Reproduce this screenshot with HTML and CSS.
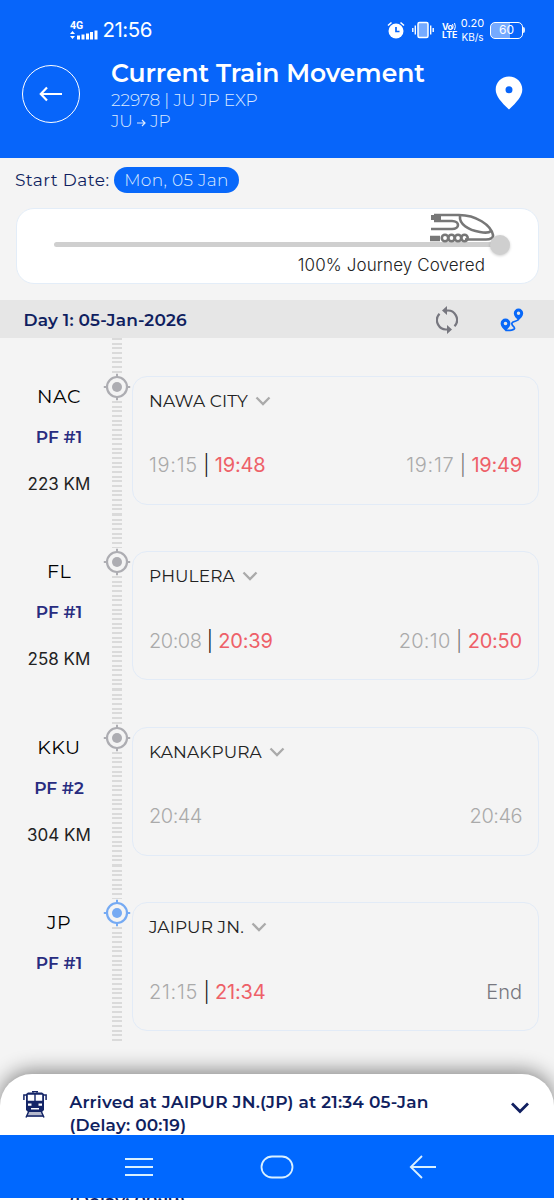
FILE: index.html
```
<!DOCTYPE html>
<html lang="en">
<head>
<meta charset="utf-8">
<title>Current Train Movement</title>
<link rel="stylesheet" href="styles.css">
</head>
<body>
<svg class="symbols" width="0" height="0">
  <symbol id="node" viewBox="0 0 28 28">
    <circle cx="14" cy="14" r="10" fill="none" stroke="currentColor" stroke-width="2.2"/>
    <circle cx="14" cy="14" r="5" fill="currentColor"/>
    <path d="M14 .8v4M14 23.2v4M.8 14h4M23.2 14h4" stroke="currentColor" stroke-width="2"/>
  </symbol>
  <symbol id="chev" viewBox="0 0 16 10"><path d="M1.500 1.500 8 8l6.500-6.500" fill="none" stroke="currentColor" stroke-width="2.300"/></symbol>
</svg>
<div class="screen">
  <header class="header">
    <div class="status">
      <div class="signal">
        <span class="net">4G</span>
        <svg width="28" height="10" viewBox="0 0 28 10" fill="#fff"><path d="M0 4 2.500 1 5 4zM0 6h5L2.500 9zM7 5.500h3v4H7zM11.500 4.500h3v5h-3zM16 3.500h3v6h-3zM20 2h3v7.500h-3zM24.500 0.500h3v9h-3z"/></svg>
      </div>
      <span class="clock">21:56</span>
      <div class="tray">
        <svg width="18" height="18" viewBox="0 0 18 18"><circle cx="9" cy="10" r="7.500" fill="#fff"/><path d="M1 4.500 4.500 1.500M17 4.500l-3.500-3" stroke="#fff" stroke-width="1.600"/><path d="M9 6v4.500h3.500" fill="none" stroke="#0765fa" stroke-width="1.700"/></svg>
        <svg class="vibrate" width="22" height="18" viewBox="0 0 22 18"><rect x="6" y="1.500" width="10" height="15" rx="1.500" fill="#75aaff" stroke="#fff" stroke-width="1.500"/><path d="M3.300 4.500v9M18.700 4.500v9M.8 7v4M21.200 7v4" stroke="#fff" stroke-width="1.400"/></svg>
        <div class="volte"><span>Vo<svg width="4" height="7" viewBox="0 0 4 7"><path d="M.5 1q1.300 2.500 0 5M2.500 0q1.700 3.500 0 7" fill="none" stroke="#fff"/></svg></span><span>LTE</span></div>
        <div class="speed"><span>0.20</span><span>KB/s</span></div>
        <div class="battery"><span>60</span></div>
      </div>
    </div>
    <div class="heading">
      <div class="back"><svg width="24" height="16" viewBox="0 0 24 16"><path d="M23 8H2M8 1.500 1.800 8 8 14.500" fill="none" stroke="#fff" stroke-width="2.200"/></svg></div>
      <div class="titles">
        <h1>Current Train Movement</h1>
        <p class="train">22978 | JU JP EXP</p>
        <p class="route">JU <svg width="9" height="8" viewBox="0 0 9 8"><path d="M0 4h8M5 1l3 3-3 3" fill="none" stroke="#dceaff" stroke-width="1.200"/></svg> JP</p>
      </div>
      <svg class="pin" width="28" height="34" viewBox="0 0 28 34"><path fill="#fff" fill-rule="evenodd" d="M14 .500C6.500.500.700 6.300.700 13.500.700 20 6 26 14 33.500 22 26 27.300 20 27.300 13.500 27.300 6.300 21.500.500 14 .500zM14 10.200a3.500 3.500 0 1 1 0 7 3.500 3.500 0 0 1 0-7z"/></svg>
    </div>
  </header>

  <div class="start"><span class="start-label">Start Date:</span><span class="date">Mon, 05 Jan</span></div>

  <section class="progress">
    <div class="bar">
      <svg class="bullet" width="68" height="30" viewBox="0 0 68 30" fill="none" stroke="#777" stroke-width="2.600">
        <path d="M5 2h25c17 0 32 10 34 20 .5 3-3 4.500-7 4.500H36"/>
        <path d="M31 3c-1 8 8 14 20 16 5 1 9 1 11-1"/>
        <path d="M5 8h18c8 0 8 8 0 8H2"/>
        <path d="M2 4.500h10" stroke-width="5"/><path d="M1 25.500h10" stroke-width="5.500"/>
        <circle cx="16" cy="25" r="3.200"/><circle cx="22.500" cy="25" r="3.200"/><circle cx="29" cy="25" r="3.200"/><circle cx="35.500" cy="25" r="3.200"/>
      </svg>
      <i class="knob"></i>
    </div>
    <p class="covered">100% Journey Covered</p>
  </section>

  <div class="day">
    <span class="day-label">Day 1: 05-Jan-2026</span>
    <svg class="refresh" width="22" height="28" viewBox="0 0 22 28"><path d="M3.500 7.800A9.300 9.300 0 0 0 12 23.300M10 4.700A9.300 9.300 0 0 1 18.500 20.200" fill="none" stroke="#77777f" stroke-width="2.200"/><path d="M11 0v9L6 4.500zM11 19v9l5-4.500z" fill="#77777f"/></svg>
    <svg class="path" width="24" height="24" viewBox="0 0 24 24"><path fill="#0868f8" fill-rule="evenodd" d="M18.500.5a4.700 4.700 0 0 0-4.700 4.700c0 3 2.500 5 4.700 7.300 2.200-2.300 4.700-4.300 4.700-7.300A4.700 4.700 0 0 0 18.500.5zm0 3a1.700 1.700 0 1 1 0 3.400 1.700 1.700 0 0 1 0-3.400zM5.500 10.500a4.900 4.900 0 0 0-4.900 4.900c0 3 2.500 5 4.900 7.600 2.400-2.600 4.900-4.600 4.900-7.600a4.900 4.900 0 0 0-4.900-4.900zm0 3.200a1.800 1.800 0 1 1 0 3.600 1.800 1.800 0 0 1 0-3.600z"/><path d="M5.500 22.300c4 .5 9.500-.2 9-2.300-.3-2-3.500-2.500-2.500-5 .8-1.800 4-1 6.500-3.500" fill="none" stroke="#0868f8" stroke-width="1.700"/></svg>
  </div>

  <main class="stations">
    <article class="station">
      <div class="info"><span class="code">NAC</span><span class="pf">PF #1</span><span class="km">223 KM</span></div>
      <div class="track"><i class="rail rail-top"></i><svg class="node"><use href="#node"/></svg><i class="rail"></i></div>
      <div class="card">
        <div class="name"><span>NAWA CITY</span><svg class="chev"><use href="#chev"/></svg></div>
        <div class="times"><div><span class="plan wide">19:15</span><span class="sep">|</span><b>19:48</b></div><div><span class="plan wide">19:17</span><span class="sep soft">|</span><b>19:49</b></div></div>
      </div>
    </article>
    <article class="station">
      <div class="info"><span class="code">FL</span><span class="pf">PF #1</span><span class="km">258 KM</span></div>
      <div class="track"><i class="rail rail-top"></i><svg class="node"><use href="#node"/></svg><i class="rail"></i></div>
      <div class="card">
        <div class="name"><span>PHULERA</span><svg class="chev"><use href="#chev"/></svg></div>
        <div class="times"><div><span class="plan">20:08</span><span class="sep">|</span><b>20:39</b></div><div><span class="plan mid">20:10</span><span class="sep soft">|</span><b>20:50</b></div></div>
      </div>
    </article>
    <article class="station">
      <div class="info"><span class="code">KKU</span><span class="pf">PF #2</span><span class="km">304 KM</span></div>
      <div class="track"><i class="rail rail-top"></i><svg class="node"><use href="#node"/></svg><i class="rail"></i></div>
      <div class="card">
        <div class="name"><span>KANAKPURA</span><svg class="chev"><use href="#chev"/></svg></div>
        <div class="times"><div><span class="plan">20:44</span></div><div><span class="plan">20:46</span></div></div>
      </div>
    </article>
    <article class="station">
      <div class="info"><span class="code">JP</span><span class="pf">PF #1</span></div>
      <div class="track"><i class="rail rail-top"></i><svg class="node current"><use href="#node"/></svg><i class="rail rail-last"></i></div>
      <div class="card">
        <div class="name"><span>JAIPUR JN.</span><svg class="chev"><use href="#chev"/></svg></div>
        <div class="times"><div><span class="plan wide">21:15</span><span class="sep">|</span><b>21:34</b></div><div><span class="end">End</span></div></div>
      </div>
    </article>
  </main>

  <section class="sheet">
    <svg class="loco" width="24" height="28" viewBox="0 0 24 28">
      <path d="M5 22h14l2 5H3z" fill="#b5b9cc"/>
      <path d="M9 1.500h6M10 1v2M14 1v2" stroke="#142567" stroke-width="1.200"/>
      <path fill="#142567" fill-rule="evenodd" d="M5 2.500h14l2 1.500v16l-2 2H5l-2-2V4zM4.800 4.800v6h6.500v-6zM12.700 4.800v6h6.500v-6zM5 13.500v2.300h3.500v-2.300zM15.500 13.500v2.300H19v-2.300zM8 18v1.500h8V18z"/>
      <path d="M3 5H.9v5M21 5h2.100v5M5.500 22 3 27.500M18.500 22l2.500 5.500M4 26h16" fill="none" stroke="#142567" stroke-width="1.500"/>
    </svg>
    <p class="arrival"><span>Arrived at JAIPUR JN.(JP) at 21:34 05-Jan</span><span>(Delay: 00:19)</span></p>
    <svg class="expand" width="18" height="12" viewBox="0 0 18 12"><path d="M1 1.500 9 9.500l8-8" fill="none" stroke="#101f60" stroke-width="2.800"/></svg>
  </section>

  <nav class="nav">
    <svg width="28" height="20" viewBox="0 0 28 20"><path d="M0 2h28M0 10h28M0 18h28" stroke="#d9f0ff" stroke-width="1.800"/></svg>
    <svg width="34" height="24" viewBox="0 0 34 24"><rect x="1.500" y="1.500" width="31" height="21" rx="10.500" fill="none" stroke="#d9f0ff" stroke-width="1.800"/></svg>
    <svg class="nav-back" width="28" height="24" viewBox="0 0 28 24"><path d="M27 12H2M13 1 1.800 12 13 23" fill="none" stroke="#d9f0ff" stroke-width="1.800"/></svg>
  </nav>
  <div class="under"><span>(Delay: 00:19)</span></div>
</div>
</body>
</html>
```

FILE: styles.css
```
* { box-sizing: border-box; }
body { margin: 0; background: #f4f4f4; font-family: Montserrat, Inter, "Liberation Sans", sans-serif; color: #101f60; }
h1, p { margin: 0; font-weight: 400; }
svg { display: block; flex: none; }
span, b { white-space: nowrap; }
.symbols { display: none; }
.screen { width: 554px; height: 1200px; overflow: hidden; display: flex; flex-direction: column; }

.header { flex: none; height: 158px; background: #0765fa; color: #fff; }
.status { height: 60px; padding: 0 31px 0 70px; display: flex; align-items: center; }
.signal { width: 28px; display: flex; flex-direction: column; }
.net { font: 700 10.500px/9px Roboto, sans-serif; }
.clock { margin-left: 4.500px; font: 400 20.500px/24px Inter, sans-serif; letter-spacing: -.5px; }
.tray { margin-left: auto; display: flex; align-items: center; }
.vibrate { margin-left: 7px; }
.volte { margin-left: 8px; margin-top: 2px; width: 16px; display: flex; flex-direction: column; font: 700 8.800px/8px Inter, sans-serif; }
.volte span { display: flex; }
.volte span:first-child { letter-spacing: -.5px; }
.speed { margin-left: 2px; margin-top: -1px; width: 25px; display: flex; flex-direction: column; align-items: center; font: 400 11px/14px Inter, sans-serif; }
.speed span + span { font-size: 10px; }
.battery { position: relative; margin-left: 5px; width: 33px; height: 17px; border: 1.500px solid #fff; border-radius: 5px; background: linear-gradient(90deg, #75aaff 60%, transparent 60%); display: grid; place-items: center; font: 400 12px/14px Inter, sans-serif; }
.battery::after { content: ""; position: absolute; right: -3px; top: 4px; width: 2px; height: 6px; border-radius: 0 2px 2px 0; background: #dceaff; }
.heading { padding: 0 31px 0 22px; display: flex; }
.back { margin-top: 5px; width: 58px; height: 58px; border: 1.500px solid #fff; border-radius: 50%; display: grid; place-items: center; }
.titles { margin-left: 31px; }
.titles h1 { margin-top: -.5px; font-size: 25px; line-height: 26px; font-weight: 600; letter-spacing: -.05px; }
.train, .route { font-size: 17px; line-height: 21px; font-weight: 300; color: #dceaff; letter-spacing: -.1px; }
.train { margin-top: 4.500px; }
.route svg { display: inline-block; }
.pin { margin: 16px 0 0 auto; }

.start { height: 50px; flex: none; display: flex; align-items: center; padding: 0 0 7px 15px; font-size: 17px; }
.start-label { width: 99px; padding-top: 1px; letter-spacing: .4px; }
.date { width: 125px; height: 26px; border-radius: 13px; background: #0868fa; color: #dceaff; font-weight: 300; line-height: 27px; text-align: center; letter-spacing: .35px; }

.progress { flex: none; height: 76px; margin: 0 15.500px; padding: 32.500px 28.500px 0 37.500px; border: 1.500px solid #e3edf8; border-radius: 18px; background: #fff; }
.bar { height: 5px; width: 450px; border-radius: 3px; background: #cfcfcf; position: relative; }
.bullet { position: absolute; left: 375px; top: -29px; }
.knob { position: absolute; right: -6px; top: -7px; width: 20px; height: 20px; border-radius: 50%; background: #cfcfcf; box-shadow: 0 1px 3px #0003; }
.covered { margin: 8.500px 24px 0 0; font: 300 17px/20px Inter, sans-serif; color: #222; text-align: right; letter-spacing: .1px; }

.day { flex: none; height: 38px; margin-top: 16px; padding: 1px 30px 0 23.500px; background: #e6e6e6; display: flex; align-items: center; }
.day-label { padding-top: 1px; font-size: 17px; font-weight: 600; letter-spacing: .15px; }
.refresh { margin-left: auto; }
.path { margin-left: 42px; }

.stations { flex: none; height: 736px; }
.station { height: 175.500px; display: flex; padding-right: 15.500px; }
.info { width: 103px; padding: 46.500px 0 0 15px; display: flex; flex-direction: column; align-items: center; }
.code { font: 400 19px/24px Montserrat, Inter, sans-serif; color: #000; letter-spacing: .5px; }
.pf { margin-top: 18px; font-size: 17px; line-height: 20px; font-weight: 600; color: #282c80; }
.km { margin-top: 27px; font: 400 17px/20px Inter, sans-serif; color: #222; }
.track { width: 28px; display: flex; flex-direction: column; align-items: center; }
.rail { flex: 1; width: 10px; background: repeating-linear-gradient(#dadada 0 2px, #f4f4f4 2px 4.667px); }
.rail-top { flex: none; height: 34.500px; }
.rail-last { margin-bottom: -3px; }
.node { width: 28px; height: 28px; color: #adadb2; }
.current { color: #75aaf3; }
.card { flex: 1; height: 129px; margin-top: 37.500px; margin-left: 1px; padding: 12px 15.500px 0 16px; border: 1.500px solid #e2ebf7; border-radius: 15px; display: flex; flex-direction: column; }
.name { display: flex; align-items: center; height: 24px; font-size: 17px; color: #222; letter-spacing: .1px; }
.chev { width: 16px; height: 10px; margin-left: 7px; color: #aaa; }
.times { margin-top: 40.500px; height: 24px; display: flex; justify-content: space-between; align-items: center; font: 300 20px/24px Inter, sans-serif; }
.times div { display: flex; }
.plan { color: #aaa; letter-spacing: -.5px; }
.wide { letter-spacing: .7px; }
.mid { letter-spacing: .3px; }
.sep { width: 17px; text-align: center; color: #111; }
.soft { color: #777; }
.times b { font-weight: 400; color: #ee6068; letter-spacing: -.2px; }
.end { color: #77777f; }

.sheet { flex: none; height: 61px; padding: 0 25px 0 23px; border-radius: 32px 32px 0 0; background: #fff; box-shadow: 0 -3px 20px #0007; display: flex; }
.loco { margin-top: 16px; }
.arrival { margin: 16.500px 0 0 22.500px; display: flex; flex-direction: column; font-size: 17px; line-height: 23px; font-weight: 600; letter-spacing: .17px; }
.expand { margin: 28px 0 0 auto; }
.nav { position: relative; flex: none; height: 63px; background: #0068ff; display: flex; align-items: center; gap: 107px; padding-left: 125px; }
.nav-back { margin-left: 8px; }
.under { position: relative; flex: none; height: 2px; overflow: hidden; background: #fff; padding-left: 69px; font-size: 17px; line-height: 6px; font-weight: 600; letter-spacing: .15px; display: flex; align-items: flex-start; }
```
